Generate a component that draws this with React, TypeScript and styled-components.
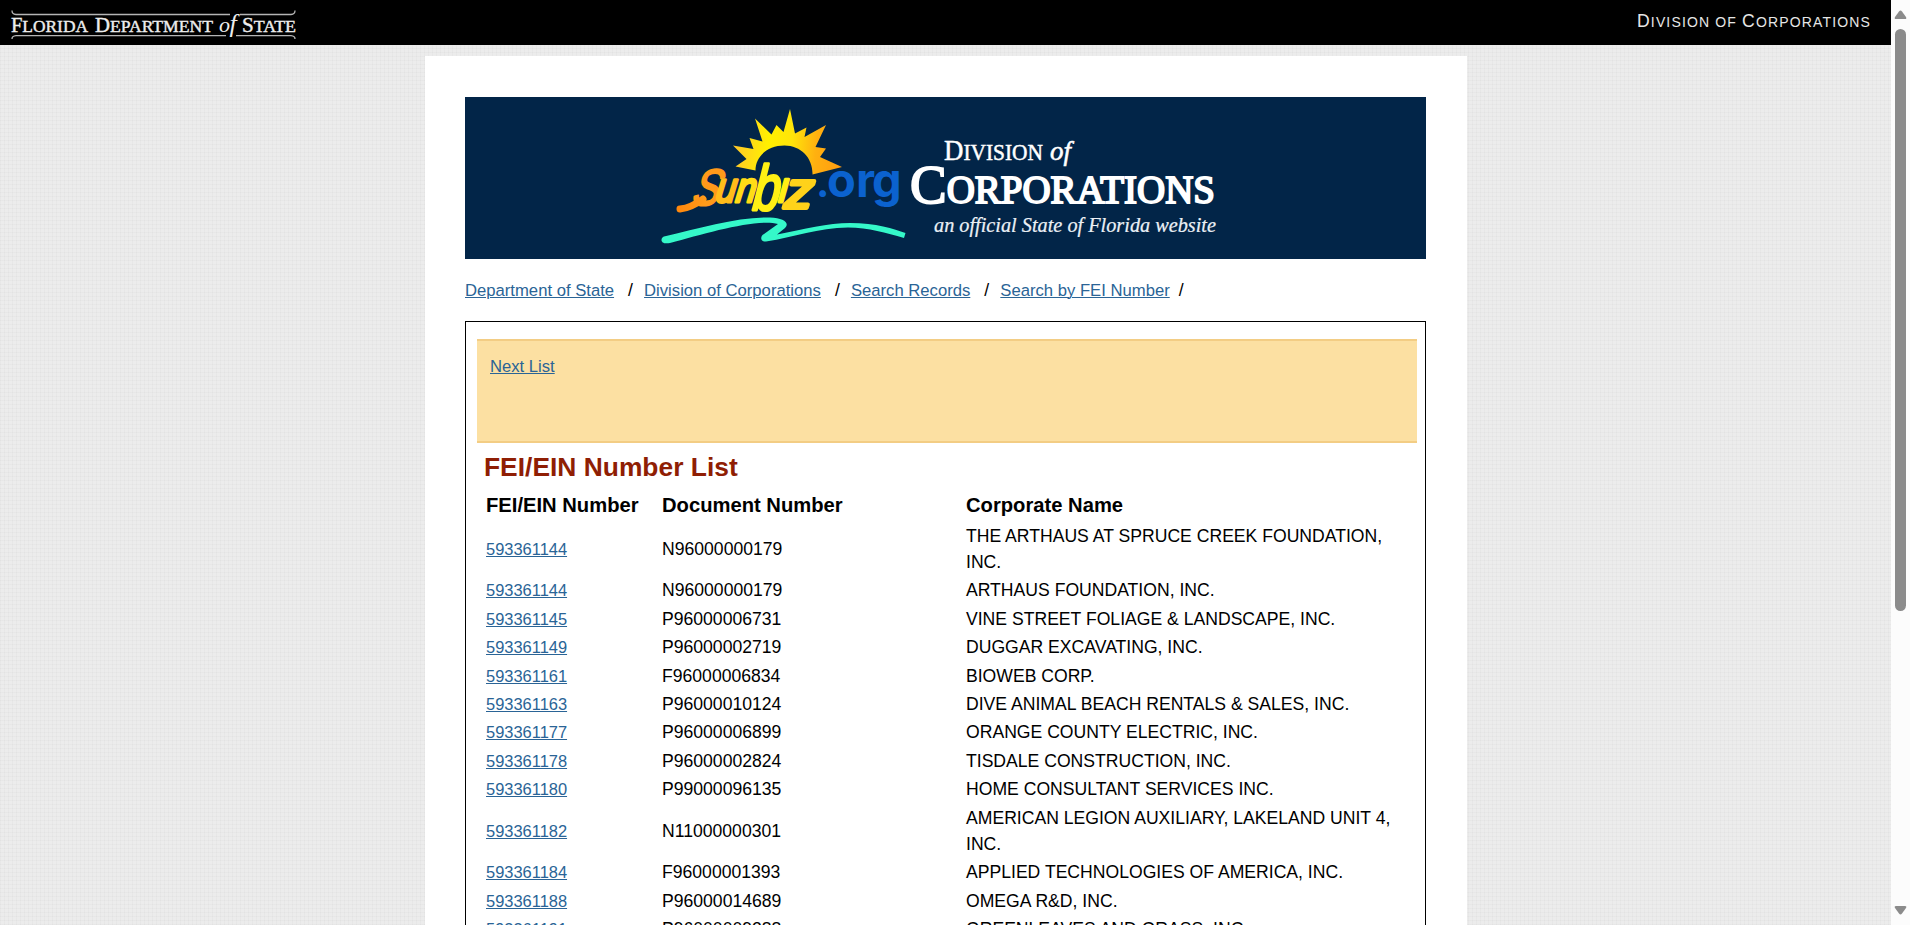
import React from "react";
import styled, { createGlobalStyle } from "styled-components";

const GlobalStyle = createGlobalStyle`
  * { box-sizing: border-box; }
  html, body { margin: 0; padding: 0; height: 100%; overflow: hidden; }
  body { font-family: "Liberation Sans", Arial, sans-serif; font-size: 16px; color: #000; }
`;

const Window = styled.div`
  display: flex;
  width: 100%;
  height: 925px;
  overflow: hidden;
`;

const Viewport = styled.div`
  flex: 1;
  min-width: 0;
  height: 925px;
  overflow: hidden;
  display: flex;
  flex-direction: column;
  background-color: #ececec;
  background-image:
    repeating-linear-gradient(90deg, rgba(0, 0, 0, 0.018) 0 1px, transparent 1px 4px),
    repeating-linear-gradient(0deg, rgba(0, 0, 0, 0.018) 0 1px, transparent 1px 4px);
`;

const TopBar = styled.header`
  flex: none;
  height: 45px;
  background: #000;
  display: flex;
  justify-content: space-between;
  align-items: flex-start;
  padding: 8px 20px 0 9px;
`;

const DivisionLabel = styled.div`
  color: #e6e6e6;
  font-size: 14px;
  line-height: 27px;
  letter-spacing: 1.15px;
  text-transform: uppercase;
`;

const Initial = styled.span`
  font-size: 17.6px;
`;

const Page = styled.main`
  flex: none;
  width: 1042px;
  height: 1400px;
  margin: 11px 0 0 425px;
  padding: 41px 40px 0;
  background: #fff;
`;

const Banner = styled.div`
  width: 961px;
  height: 162px;
  background: #022548;
`;

const Breadcrumbs = styled.nav`
  display: flex;
  height: 62px;
  padding-top: 20px;
  line-height: 23px;
  white-space: pre;
`;

const Link = styled.a<{ $size?: number }>`
  color: #2a6496;
  font-size: ${(p) => p.$size ?? 16.45}px;
  text-decoration: underline;
  text-decoration-thickness: 1px;
  text-underline-offset: 1px;
`;

const Slash = styled.span<{ $last?: boolean }>`
  width: ${(p) => (p.$last ? "23px" : "30px")};
  padding-left: ${(p) => (p.$last ? "9px" : "14px")};
  font-size: 17.6px;
`;

const Panel = styled.section`
  width: 961px;
  height: 1100px;
  border: 1px solid #000;
  padding: 17px 8px 0 11px;
`;

const NavBox = styled.div`
  height: 104px;
  border: 2px solid #f3cd84;
  border-left: 0;
  border-right: 0;
  background: #fce0a2;
  padding: 14px 13px;
  line-height: 24px;
`;

const Title = styled.h2`
  margin: 6px 0 0 7px;
  font-size: 26.4px;
  line-height: 37px;
  color: #8f1e04;
`;

const Results = styled.table`
  margin-left: 7px;
  border-collapse: separate;
  border-spacing: 2px;
  table-layout: fixed;
  width: 922px;
  font-size: 17.6px;
  line-height: 26.4px;
`;

const Head = styled.th<{ $width: number }>`
  width: ${(p) => p.$width}px;
  height: 32.6px;
  padding: 1px 0 0;
  text-align: left;
  font-size: 20.2px;
`;

const Cell = styled.td`
  padding: 0;
  vertical-align: middle;
`;

const ScrollTrack = styled.div`
  flex: none;
  width: 19px;
  height: 925px;
  padding: 9px 4px 9px;
  background: #fcfcfc;
  display: flex;
  flex-direction: column;
  align-items: center;
`;

const ScrollThumb = styled.div`
  width: 11px;
  height: 582px;
  margin: 9px 0 auto;
  border-radius: 6px;
  background: #8b8b8b;
`;

const ArrowSvg = styled.svg`
  flex: none;
`;

const Arrow = ({ down }: { down?: boolean }) => (
  <ArrowSvg width="13" height="11" viewBox="0 0 13 11">
    <path
      d={down ? "M2 1H11Q13 1 12 3L8 8.6Q6.500 10.500 5 8.600L1 3Q0 1 2 1Z" : "M2 10H11Q13 10 12 8L8 2.400Q6.500 .5 5 2.400L1 8Q0 10 2 10Z"}
      fill="#8b8b8b"
    />
  </ArrowSvg>
);

const StateLogo = () => (
  <svg width="292" height="36" viewBox="9 8 292 36">
    <g fill="none" stroke="#b5b5b5" strokeWidth="1.300">
      <path d="M12 10.500Q12 14.300 16 14.500H230M240 14.500H291Q295 14.300 295 10.500" />
      <path d="M12 39Q12 36 16 35.700H226M236 35.700H291Q295 36 295 39" />
    </g>
    <g fill="#ededed" fontFamily="'Liberation Serif', serif">
      <text x="11" y="31.500" fontSize="20" stroke="#ededed" strokeWidth=".4" textLength="77" lengthAdjust="spacingAndGlyphs">F<tspan fontSize="17">LORIDA</tspan></text>
      <text x="95" y="31.500" fontSize="20" stroke="#ededed" strokeWidth=".4" textLength="118" lengthAdjust="spacingAndGlyphs">D<tspan fontSize="17">EPARTMENT</tspan></text>
      <text x="219" y="31.500" fontSize="22" fontStyle="italic">o<tspan fontSize="26" dx="-.5">f</tspan></text>
      <text x="242" y="31.500" fontSize="20" stroke="#ededed" strokeWidth=".4" textLength="54" lengthAdjust="spacingAndGlyphs">S<tspan fontSize="17">TATE</tspan></text>
    </g>
  </svg>
);

const BannerArt = () => (
  <svg width="961" height="162" viewBox="465 97 961 162">
    <defs>
      <linearGradient id="ray" gradientUnits="userSpaceOnUse" x1="735" y1="150" x2="842" y2="160">
        <stop offset="0" stopColor="#ffc928" />
        <stop offset=".3" stopColor="#fff000" />
        <stop offset=".52" stopColor="#ffe40a" />
        <stop offset=".75" stopColor="#ffb010" />
        <stop offset="1" stopColor="#ff9c10" />
      </linearGradient>
      <linearGradient id="word" gradientUnits="userSpaceOnUse" x1="676" y1="200" x2="816" y2="190">
        <stop offset="0" stopColor="#ff870c" />
        <stop offset=".25" stopColor="#ff9e1c" />
        <stop offset=".5" stopColor="#ffe414" />
        <stop offset=".68" stopColor="#fff200" />
        <stop offset=".85" stopColor="#ffda18" />
        <stop offset="1" stopColor="#ffad12" />
      </linearGradient>
    </defs>
    <path
      fill="url(#ray)"
      d="M755.500 170.500L735.500 166.500L746.500 159L733 145.500L753.500 149L749.500 138L762.500 141.500L755 118.500L771.500 134.500L776.500 125L783.500 132L790 109L795 133.500L806.500 127.500L804.500 137L826 125L815.500 147L826 148.500L820 157L842 167L812.500 174.500C813 158 801 145.500 784.500 145.500C768 145.500 755.500 156 755.500 170.500Z"
    />
    <g
      strokeWidth="2.200"
      strokeLinejoin="round"
      fontFamily="'Liberation Sans', sans-serif"
      fontStyle="italic"
    >
      <text transform="translate(691 205) skewX(-14)" fontSize="51" textLength="27" lengthAdjust="spacingAndGlyphs" fill="#ff9a1a" stroke="#ff9a1a">S</text>
      <text transform="translate(715 202) skewX(-8)" fontSize="42" textLength="20" lengthAdjust="spacingAndGlyphs" fill="#ffbc1a" stroke="#ffbc1a" strokeWidth="3.200">u</text>
      <text transform="translate(735 202) skewX(-8)" fontSize="42" textLength="20" lengthAdjust="spacingAndGlyphs" fill="#ffdc16" stroke="#ffdc16" strokeWidth="3.200">n</text>
      <text transform="translate(752 210) skewX(-6)" fontSize="64" textLength="27" lengthAdjust="spacingAndGlyphs" fill="#fff014" stroke="#fff014" strokeWidth="3">b</text>
      <text transform="translate(777 202) skewX(-6)" fontSize="43" textLength="11" lengthAdjust="spacingAndGlyphs" fill="#ffee14" stroke="#ffee14" strokeWidth="3">ı</text>
      <text transform="translate(784 208) skewX(-6)" fontSize="51" textLength="28" lengthAdjust="spacingAndGlyphs" fill="#ffd21a" stroke="#ffd21a" strokeWidth="4">z</text>
    </g>
    <path d="M680 209Q691 208 703 199" fill="none" stroke="url(#word)" strokeWidth="7" strokeLinecap="round" />
    <text y="197" fontFamily="Inter, sans-serif" fontWeight="700" fontSize="47" fill="#0b62cf">
      <tspan x="816" fontSize="40">.</tspan>
      <tspan x="827">o</tspan>
      <tspan x="856">r</tspan>
      <tspan x="872">g</tspan>
    </text>
    <path
      fill="#35f8c9"
      d="M664 236.500C700 228 739 216.500 770 217.500C784 218 790 223 785 228L777 234.500C804 229 828 223 850 223C876 223 894 229 905.500 233L904 238C886 233 869 227.500 848 227.500C818 228 794 237 766 241.500C760 242 760 236 764 234L778 224C758 218 706 233 670 243C660 245 660 238 664 236.500Z"
    />
    <g fill="#fff" stroke="#fff" fontFamily="'Liberation Serif', serif">
      <text x="944" y="160" strokeWidth=".5" fontSize="29.500" textLength="99" lengthAdjust="spacingAndGlyphs">D<tspan fontSize="23.500">IVISION</tspan></text>
      <text x="1050" y="160" strokeWidth=".5" fontSize="27" fontStyle="italic" textLength="21" lengthAdjust="spacingAndGlyphs">of</text>
      <text x="910" y="203" strokeWidth="1.900" fontSize="55" textLength="305" lengthAdjust="spacingAndGlyphs">C<tspan fontSize="39">ORPORATIONS</tspan></text>
      <text x="934" y="232" strokeWidth=".2" fill="#e8eef5" fontSize="21" fontStyle="italic" textLength="282" lengthAdjust="spacingAndGlyphs">an official State of Florida website</text>
    </g>
  </svg>
);

const crumbs = ["Department of State", "Division of Corporations", "Search Records", "Search by FEI Number"];

const rows = [
  ["593361144", "N96000000179", "THE ARTHAUS AT SPRUCE CREEK FOUNDATION, INC."],
  ["593361144", "N96000000179", "ARTHAUS FOUNDATION, INC."],
  ["593361145", "P96000006731", "VINE STREET FOLIAGE & LANDSCAPE, INC."],
  ["593361149", "P96000002719", "DUGGAR EXCAVATING, INC."],
  ["593361161", "F96000006834", "BIOWEB CORP."],
  ["593361163", "P96000010124", "DIVE ANIMAL BEACH RENTALS & SALES, INC."],
  ["593361177", "P96000006899", "ORANGE COUNTY ELECTRIC, INC."],
  ["593361178", "P96000002824", "TISDALE CONSTRUCTION, INC."],
  ["593361180", "P99000096135", "HOME CONSULTANT SERVICES INC."],
  ["593361182", "N11000000301", "AMERICAN LEGION AUXILIARY, LAKELAND UNIT 4, INC."],
  ["593361184", "F96000001393", "APPLIED TECHNOLOGIES OF AMERICA, INC."],
  ["593361188", "P96000014689", "OMEGA R&D, INC."],
  ["593361191", "P96000009288", "GREENLEAVES AND GRASS, INC."],
];

export default function App() {
  return (
    <Window>
      <GlobalStyle />
      <Viewport>
        <TopBar>
          <StateLogo />
          <DivisionLabel>
            <Initial>D</Initial>ivision of <Initial>C</Initial>orporations
          </DivisionLabel>
        </TopBar>
        <Page>
          <Banner>
            <BannerArt />
          </Banner>
          <Breadcrumbs>
            {crumbs.map((label, i) => (
              <React.Fragment key={label}>
                <Link $size={16.66}>{label}</Link>
                <Slash $last={i === crumbs.length - 1}>/</Slash>
              </React.Fragment>
            ))}
          </Breadcrumbs>
          <Panel>
            <NavBox>
              <Link $size={16.64}>Next List</Link>
            </NavBox>
            <Title>FEI/EIN Number List</Title>
            <Results>
              <thead>
                <tr>
                  <Head $width={174}>FEI/EIN Number</Head>
                  <Head $width={302}>Document Number</Head>
                  <Head $width={438}>Corporate Name</Head>
                </tr>
              </thead>
              <tbody>
                {rows.map(([fei, doc, name]) => (
                  <tr key={fei + name}>
                    <Cell>
                      <Link>{fei}</Link>
                    </Cell>
                    <Cell>{doc}</Cell>
                    <Cell>{name}</Cell>
                  </tr>
                ))}
              </tbody>
            </Results>
          </Panel>
        </Page>
      </Viewport>
      <ScrollTrack>
        <Arrow />
        <ScrollThumb />
        <Arrow down />
      </ScrollTrack>
    </Window>
  );
}
